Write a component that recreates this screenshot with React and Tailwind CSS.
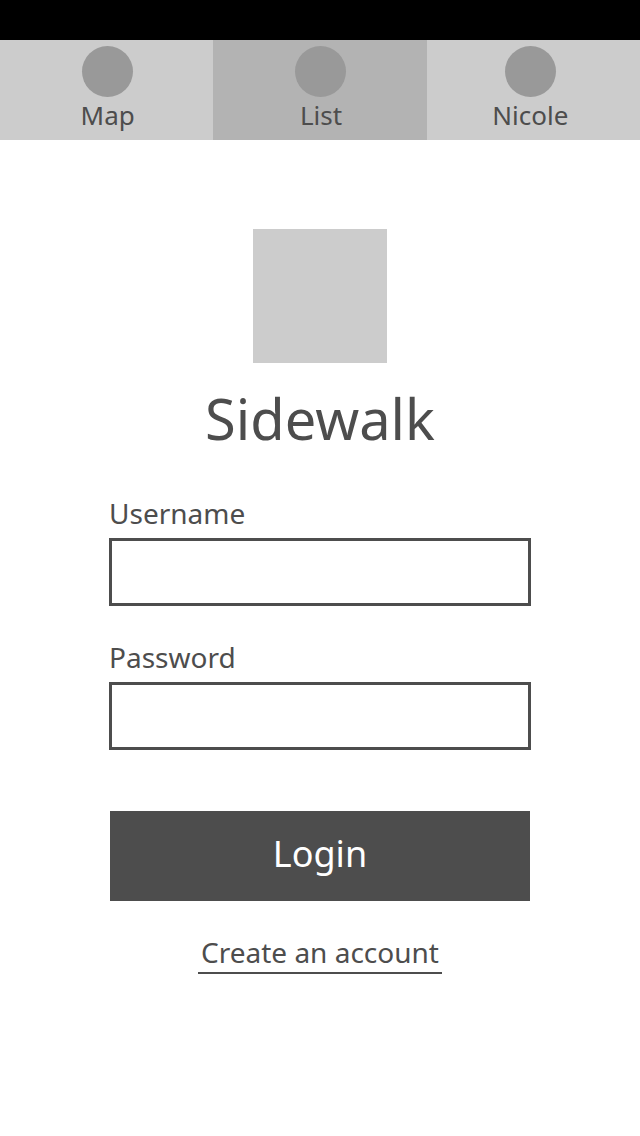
const tabs = [
  { label: "Map", href: "#map" },
  { label: "List", href: "#list", active: true },
  { label: "Nicole", href: "#nicole" },
];

function Tab({ label, href, active }) {
  return (
    <a
      href={href}
      aria-current={active ? "page" : undefined}
      className={`flex flex-col items-center pt-1.5 pl-0.5 last:pr-2 ${active ? "bg-[#b3b3b3]" : "bg-[#cccccc]"}`}
    >
      <span className="size-[51px] rounded-full bg-[#999999]" />
      <span className="mt-0.5 text-[26px] leading-8">{label}</span>
    </a>
  );
}

function Field({ id, label, type }) {
  return (
    <div className="flex flex-col gap-[7px]">
      <label htmlFor={id} className="text-[28px] leading-9">
        {label}
      </label>
      <input
        id={id}
        type={type}
        className="h-17 w-full border-[3px] border-[#4d4d4d] bg-white px-4 text-[28px] outline-none"
      />
    </div>
  );
}

export default function App() {
  return (
    <div className="min-h-screen bg-white font-['Noto_Sans',sans-serif] text-[#4d4d4d]">
      <header>
        <div className="h-10 bg-black" />
        <nav className="grid h-[100px] grid-cols-3">
          {tabs.map((tab) => (
            <Tab key={tab.label} {...tab} />
          ))}
        </nav>
      </header>
      <main className="flex flex-col items-center px-[109px] pt-[89px]">
        <div className="size-[134px] bg-[#cccccc]" />
        <h1 className="mt-5 text-[56px] leading-[70px]">Sidewalk</h1>
        <form className="mt-[42px] flex w-full flex-col" onSubmit={(e) => e.preventDefault()}>
          <div className="flex flex-col gap-[33px]">
            <Field id="username" label="Username" type="text" />
            <Field id="password" label="Password" type="password" />
          </div>
          <button type="submit" className="mx-px mt-[61px] h-[90px] bg-[#4d4d4d] pb-1 text-[36px] text-white">
            Login
          </button>
        </form>
        <a href="#create" className="mt-8 border-b-2 border-[#4d4d4d] px-[3px] text-[28px] leading-[39px]">
          Create an account
        </a>
      </main>
    </div>
  );
}
